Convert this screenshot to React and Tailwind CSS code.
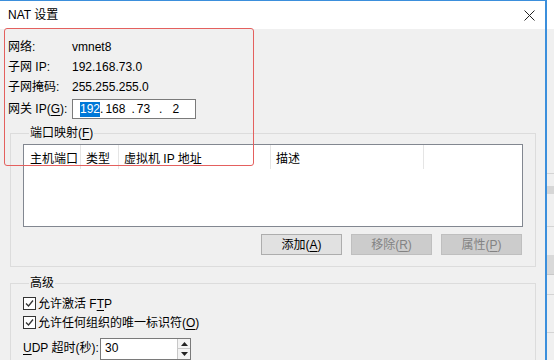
import React from "react";

const U = ({ children }) => <span className="underline underline-offset-[2px]">{children}</span>;

function Check() {
  return (
    <span className="w-[13px] h-[13px] border border-[#333333] bg-white flex items-center justify-center">
      <svg width="11" height="11" viewBox="0 0 11 11">
        <path d="M2 5.5 L4.5 8 L9 2.5" fill="none" stroke="#333333" strokeWidth="1.3" />
      </svg>
    </span>
  );
}

function Btn({ children, disabled }) {
  return (
    <div
      className={
        "w-[81px] h-[21px] flex items-center justify-center border text-[12px] " +
        (disabled
          ? "bg-[#cccccc] border-[#bfbfbf] text-[#838383]"
          : "bg-[#e1e1e1] border-[#adadad] text-black")
      }
    >
      {children}
    </div>
  );
}

export default function App() {
  return (
    <div className="relative w-[554px] h-[360px] overflow-hidden flex bg-[#f0f0f0] text-[12px] leading-[14px] text-black font-['Liberation_Sans','Noto_Sans_CJK_SC',sans-serif]">
      {/* dialog window */}
      <div className="w-[547px] h-[360px] shrink-0 flex flex-col border-t border-r-2 border-[#3b8fdc] overflow-hidden">
        <div className="h-[28px] shrink-0 bg-white flex items-center justify-between pl-[8px] pr-[10px]">
          <span>NAT 设置</span>
          <svg width="11" height="11" viewBox="0 0 11 11">
            <path d="M0.5 0.5 L10.5 10.5 M10.5 0.5 L0.5 10.5" stroke="#222" strokeWidth="1" />
          </svg>
        </div>
        <div className="shrink-0 bg-[#f0f0f0] pt-[8px]">
          <div className="pl-[8px]">
            <div className="h-[20px] flex items-center">
              <span className="w-[64px]">网络:</span>
              <span>vmnet8</span>
            </div>
            <div className="h-[20px] flex items-center">
              <span className="w-[64px]">子网 IP:</span>
              <span>192.168.73.0</span>
            </div>
            <div className="h-[20px] flex items-center">
              <span className="w-[64px]">子网掩码:</span>
              <span>255.255.255.0</span>
            </div>
            <div className="h-[20px] mt-[2px] flex items-center">
              <span className="w-[64px]">
                网关 IP(<U>G</U>):
              </span>
              <div className="w-[124px] h-[20px] border border-[#7a7a7a] bg-white flex items-center pl-[7px]">
                <span className="bg-[#0078d7] text-white leading-[15px]">192</span>
                <span>.</span>
                <span className="ml-[2px]">168</span>
                <span className="ml-[6px]">.</span>
                <span className="ml-[2px]">73</span>
                <span className="ml-[9px]">.</span>
                <span className="ml-[10px]">2</span>
              </div>
            </div>
          </div>

          <fieldset className="mt-[7px] ml-[10px] w-[526px] border border-[#dcdcdc] pl-[12px] pr-[12px] pb-[11px]">
            <legend className="ml-[6px] px-[1px]">
              端口映射(<U>F</U>)
            </legend>
            <div className="mt-[4px] h-[83px] border border-[#828790] bg-white">
              <div className="h-[24px] flex">
                <div className="w-[57px] pl-[6px] pt-[7px] border-r border-[#e5e5e5]">主机端口</div>
                <div className="w-[38px] pl-[5px] pt-[7px] border-r border-[#e5e5e5]">类型</div>
                <div className="w-[152px] pl-[5px] pt-[7px] border-r border-[#e5e5e5]">虚拟机 IP 地址</div>
                <div className="w-[153px] pl-[5px] pt-[7px] border-r border-[#e5e5e5]">描述</div>
              </div>
            </div>
            <div className="mt-[7px] flex justify-end gap-[9px] pr-[1px]">
              <Btn>
                添加(<U>A</U>)
              </Btn>
              <Btn disabled>
                移除(<U>R</U>)
              </Btn>
              <Btn disabled>
                属性(<U>P</U>)
              </Btn>
            </div>
          </fieldset>

          <fieldset className="mt-[9px] ml-[10px] w-[526px] h-[120px] border border-[#dcdcdc] pl-[12px]">
            <legend className="ml-[6px] px-[1px]">高级</legend>
            <div className="mt-[4px] h-[19px] flex items-center gap-[2px]">
              <Check />
              <span>
                允许激活 F<U>T</U>P
              </span>
            </div>
            <div className="h-[19px] flex items-center gap-[2px]">
              <Check />
              <span>
                允许任何组织的唯一标识符(<U>O</U>)
              </span>
            </div>
            <div className="mt-[6px] flex items-start">
              <span className="w-[77px] pt-[3px]">
                <U>U</U>DP 超时(秒):
              </span>
              <div className="w-[91px] h-[22px] border border-[#7a7a7a] bg-white flex">
                <span className="flex-1 pl-[4px] pt-[2px]">30</span>
                <div className="w-[13px] flex flex-col border-l border-[#c8c8c8]">
                  <div className="h-[10px] flex items-center justify-center bg-[#f3f3f3] border-b border-[#c8c8c8]">
                    <svg width="7" height="4" viewBox="0 0 7 4">
                      <path d="M0 4 L3.5 0 L7 4 Z" fill="#222" />
                    </svg>
                  </div>
                  <div className="flex-1 flex items-center justify-center bg-[#f3f3f3]">
                    <svg width="7" height="4" viewBox="0 0 7 4">
                      <path d="M0 0 L3.5 4 L7 0 Z" fill="#222" />
                    </svg>
                  </div>
                </div>
              </div>
            </div>
          </fieldset>
        </div>
      </div>

      {/* background window strip */}
      <div className="flex-1 flex flex-col bg-[#f0f0f0]">
        <div className="h-[29px] bg-white" />
        <div className="h-[145px] border-b border-[#d4d4d4]" />
        <div className="h-[12px]" />
        <div className="h-[8px] bg-[#d6d6d6]" />
        <div className="h-[33px] border-b border-[#d4d4d4]" />
        <div className="h-[28px]" />
        <div className="h-[20px] bg-[#d9d9d9] border-b border-[#c8c8c8]" />
        <div className="h-[20px] border-b border-[#d4d4d4]" />
        <div className="h-[38px] border-b border-[#d4d4d4]" />
      </div>

      {/* red annotation */}
      <div className="absolute left-[4px] top-[28px] w-[250px] h-[138px] border-[1.5px] border-[#e4605e] rounded-[3px] pointer-events-none" />
    </div>
  );
}
